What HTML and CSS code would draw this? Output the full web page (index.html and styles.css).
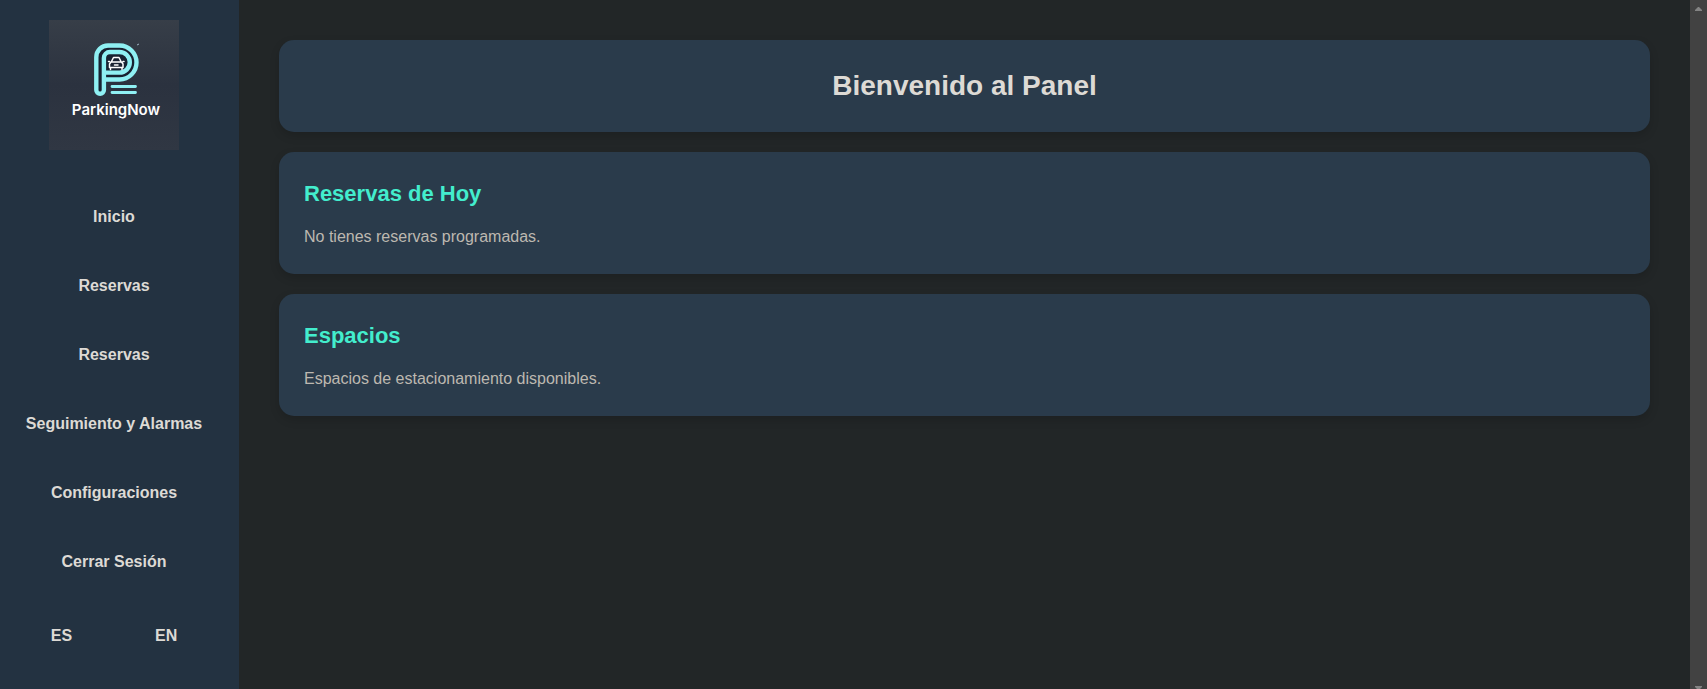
FILE: index.html
```html
<!DOCTYPE html>
<html lang="es">
<head>
  <meta charset="utf-8">
  <meta name="viewport" content="width=device-width, initial-scale=1">
  <title>ParkingNow</title>
  <link rel="stylesheet" href="styles.css">
</head>
<body>
  <aside class="sidebar">
    <svg class="logo" viewBox="0 0 130 130" role="img" aria-label="ParkingNow">
      <defs>
        <linearGradient id="glow" x1="0" y1="0" x2="0" y2="1">
          <stop offset="0" stop-color="#373e48"/>
          <stop offset="0.5" stop-color="#2b323f"/>
          <stop offset="1" stop-color="#303743"/>
        </linearGradient>
      </defs>
      <rect width="130" height="130" fill="url(#glow)"/>
      <path d="M50 28h24l13 8v17l-14 7H55v14h-8V32z" fill="#182231"/>
      <g fill="none" stroke="#8ff0f3" stroke-width="4.400" stroke-linecap="round" stroke-linejoin="round">
        <path d="M55 59.500H70.500a17 17 0 0 0 0-34H59a11.700 11.700 0 0 0-11.700 11.700V70a3.800 3.800 0 0 0 7.600 0V38a6 6 0 0 1 6-6H70.500a10.300 10.300 0 0 1 0 20.600H56"/>
        <path stroke-width="2.800" d="M63 66.500H86.500M63 72.500H86.500"/>
      </g>
      <g fill="none" stroke="#fff" stroke-width="1.500" stroke-linejoin="round" stroke-linecap="round">
        <path d="M62.500 41.500l2-4h5.500l2 4M62 42h10.500l1.500 2v3.500H60.500V44zM61.500 48v1.500M73 48v1.500M65.500 45h3.500M59.500 41.500h1M74 41.500h1"/>
      </g>
      <path d="M88 25l2-1" stroke="#9fb4c2"/>
      <text class="logo-text" x="67" y="95" text-anchor="middle">ParkingNow</text>
    </svg>
    <nav class="menu">
      <a href="#">Inicio</a>
      <a href="#">Reservas</a>
      <a href="#">Reservas</a>
      <a href="#">Seguimiento y Alarmas</a>
      <a href="#">Configuraciones</a>
      <a href="#">Cerrar Sesión</a>
    </nav>
    <div class="languages">
      <button type="button">ES</button>
      <button type="button">EN</button>
    </div>
  </aside>
  <main class="content">
    <header class="card">
      <h1>Bienvenido al Panel</h1>
    </header>
    <section class="card">
      <h2>Reservas de Hoy</h2>
      <p>No tienes reservas programadas.</p>
    </section>
    <section class="card">
      <h2>Espacios</h2>
      <p>Espacios de estacionamiento disponibles.</p>
    </section>
  </main>
  <div class="scroll-track" aria-hidden="true">
    <svg width="7" height="4" viewBox="0 0 7 4"><path d="M3 0h1l3 3v1H0V3z"/></svg>
    <svg width="7" height="3" viewBox="0 0 7 3"><path d="M0 0h7v1L5 3H2L0 1z"/></svg>
  </div>
</body>
</html>
```
FILE: styles.css
```css
* {
  box-sizing: border-box;
  margin: 0;
  padding: 0;
}

body {
  display: flex;
  min-height: 100vh;
  background: #222627;
  color: #dddad5;
  font-family: "Liberation Sans", Arial, sans-serif;
  font-size: 16px;
  line-height: 24px;
}

.sidebar {
  flex: none;
  display: flex;
  flex-direction: column;
  align-items: center;
  width: 239px;
  padding: 20px 31px 20px 20px;
  background: #233241;
}

.logo {
  width: 130px;
  height: 130px;
}

.logo-text {
  fill: #fff;
  font-family: Inter, "Open Sans", sans-serif;
  font-size: 15px;
  font-weight: 600;
}

.menu {
  display: flex;
  flex-direction: column;
  align-items: center;
  gap: 15px;
  margin-top: 40px;
}

.menu a {
  padding: 15px 0;
  color: inherit;
  font-weight: bold;
  text-decoration: none;
  white-space: nowrap;
}

.languages {
  display: flex;
  gap: 83px;
  margin-top: 35px;
}

.languages button {
  border: 0;
  background: none;
  color: inherit;
  font: inherit;
  font-weight: bold;
  cursor: pointer;
}

.content {
  flex: 1;
  display: flex;
  flex-direction: column;
  gap: 20px;
  padding: 40px;
}

.card {
  padding: 25px;
  border-radius: 15px;
  background: #2a3b4b;
  box-shadow: 0 4px 10px rgba(0, 0, 0, 0.15);
}

h1 {
  font-size: 28px;
  line-height: 42px;
  text-align: center;
}

h2 {
  margin-bottom: 15px;
  color: #43edcd;
  font-size: 22px;
  line-height: 33px;
}

p {
  color: #bdb8b0;
}

.scroll-track {
  flex: none;
  display: flex;
  flex-direction: column;
  align-items: center;
  justify-content: space-between;
  width: 17px;
  padding-top: 7px;
  background: #424242;
  fill: #848484;
}
```
